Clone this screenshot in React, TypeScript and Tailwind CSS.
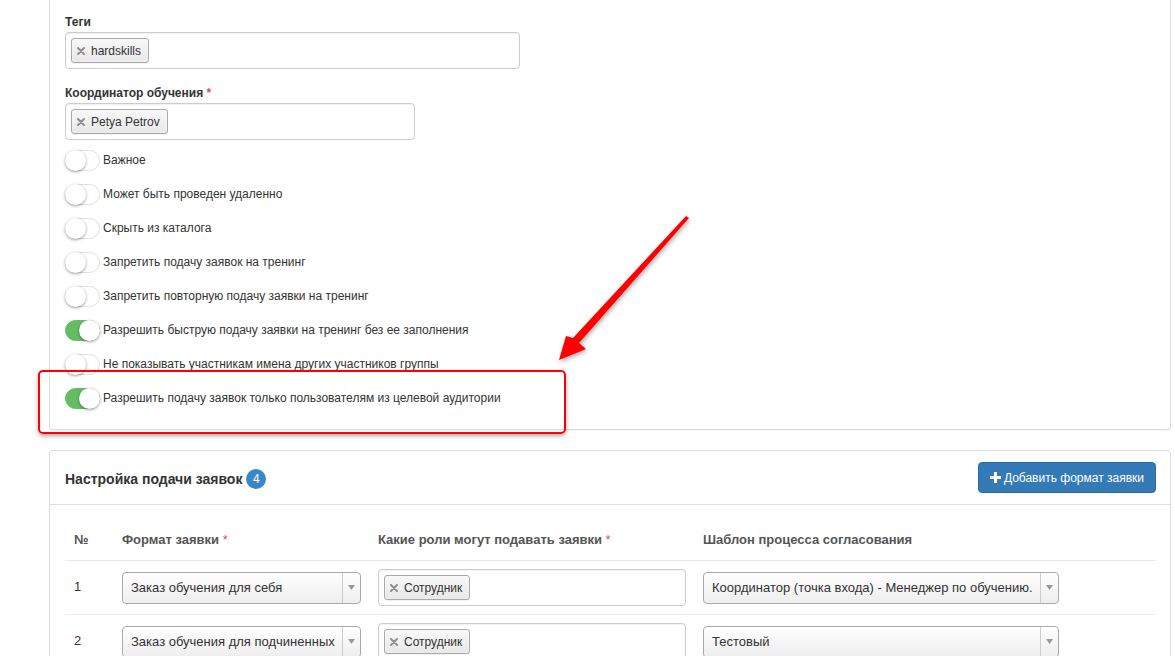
import React from 'react';

interface ToggleRow {
  label: string;
  on: boolean;
}

const toggles: ToggleRow[] = [
  { label: 'Важное', on: false },
  { label: 'Может быть проведен удаленно', on: false },
  { label: 'Скрыть из каталога', on: false },
  { label: 'Запретить подачу заявок на тренинг', on: false },
  { label: 'Запретить повторную подачу заявки на тренинг', on: false },
  { label: 'Разрешить быструю подачу заявки на тренинг без ее заполнения', on: true },
  { label: 'Не показывать участникам имена других участников группы', on: false },
  { label: 'Разрешить подачу заявок только пользователям из целевой аудитории', on: true },
];

interface RequestRow {
  n: number;
  format: string;
  role: string;
  template: string;
}

const rows: RequestRow[] = [
  { n: 1, format: 'Заказ обучения для себя', role: 'Сотрудник', template: 'Координатор (точка входа) - Менеджер по обучению.' },
  { n: 2, format: 'Заказ обучения для подчиненных', role: 'Сотрудник', template: 'Тестовый' },
];

function Chip({ text }: { text: string }) {
  return (
    <span className="inline-flex items-center h-[25px] pl-[5px] pr-[7px] gap-[6px] rounded-[3px] border border-[#aaa] bg-gradient-to-b from-[#f8f8f8] to-[#e8e8e8] shadow-[0_0_2px_rgba(255,255,255,0.8)_inset,0_1px_0_rgba(0,0,0,0.05)] text-[12px] text-[#333]">
      <svg width="8" height="8" viewBox="0 0 8 8">
        <path d="M1 1l6 6M7 1L1 7" stroke="#8f8f8f" strokeWidth="2" strokeLinecap="round" />
      </svg>
      {text}
    </span>
  );
}

function TagBox({ tag, width }: { tag: string; width: string }) {
  return (
    <div className={`${width} h-[37px] rounded-[4px] border border-[#ccc] bg-white px-[5px] flex items-center shadow-[inset_0_1px_1px_rgba(0,0,0,0.06)]`}>
      <Chip text={tag} />
    </div>
  );
}

function Switch({ on }: { on: boolean }) {
  return (
    <span
      className={`relative inline-block w-[35px] h-[21px] rounded-full border shrink-0 ${
        on ? 'bg-[#64bd63] border-[#64bd63]' : 'bg-white border-[#dfdfdf]'
      }`}
    >
      <span
        className={`absolute top-[-1px] w-[21px] h-[21px] rounded-full bg-white shadow-[0_1px_3px_rgba(0,0,0,0.4)] ${
          on ? 'right-[-1px]' : 'left-[-1px]'
        }`}
      />
    </span>
  );
}

function Select({ value, width }: { value: string; width: string }) {
  return (
    <div className={`${width} h-[32px] rounded-[4px] border border-[#aaa] bg-gradient-to-b from-white to-[#eee] flex items-center text-[13px] text-[#333]`}>
      <span className="flex-1 pl-[8px] whitespace-nowrap overflow-hidden">{value}</span>
      <span className="w-[18px] h-full border-l border-[#ccc] flex items-center justify-center">
        <svg width="7" height="5" viewBox="0 0 7 5">
          <path d="M0 0h7L3.5 5z" fill="#999" />
        </svg>
      </span>
    </div>
  );
}

export default function App() {
  return (
    <div className="relative min-h-screen bg-white text-[#333] font-['Liberation_Sans',Arial,sans-serif] overflow-hidden">
      <div className="pl-[49px] pr-[4px]">
        <section className="border border-t-0 border-[#ddd] rounded-b-[4px] px-[15px] pt-[14px] pb-[14px] shadow-[0_1px_1px_rgba(0,0,0,0.05)]">
          <div className="mb-[16px]">
            <div className="h-[17px] leading-[17px] text-[12px] font-bold mb-[1px]">Теги</div>
            <TagBox tag="hardskills" width="w-[455px]" />
          </div>
          <div>
            <div className="h-[17px] leading-[17px] text-[12px] font-bold mb-[1px]">
              Координатор обучения <span className="text-[#d9534f]">*</span>
            </div>
            <TagBox tag="Petya Petrov" width="w-[350px]" />
          </div>
          <div className="mt-[3px]">
            {toggles.map((t) => (
              <div key={t.label} className="h-[34px] flex items-center gap-[3px]">
                <Switch on={t.on} />
                <span className="text-[12px] text-[#333] whitespace-nowrap">{t.label}</span>
              </div>
            ))}
          </div>
        </section>

        <section className="mt-[20px] border border-[#ddd] rounded-t-[4px] shadow-[0_1px_1px_rgba(0,0,0,0.05)]">
          <div className="h-[54px] border-b border-[#ddd] pl-[15px] pr-[14px] flex items-center justify-between">
            <div className="flex items-center gap-[4px] pt-[3px]">
              <span className="text-[14px] font-bold text-[#333]">Настройка подачи заявок</span>
              <span className="w-[20px] h-[20px] rounded-full bg-[#3a87c8] text-white text-[12px] flex items-center justify-center">4</span>
            </div>
            <button className="h-[31px] px-[11px] rounded-[4px] bg-[#337ab7] border border-[#2e6da4] text-white text-[12px] flex items-center gap-[3px]">
              <svg width="11" height="11" viewBox="0 0 11 11">
                <path d="M4 0h3v4h4v3H7v4H4V7H0V4h4z" fill="#fff" />
              </svg>
              Добавить формат заявки
            </button>
          </div>
          <div className="pt-[15px] px-[15px] pr-[14px]">
            <div className="grid grid-cols-[49px_256px_325px_1fr] h-[40px] items-center text-[13px] font-bold text-[#555]">
              <div className="pl-[9px]">№</div>
              <div className="pl-[8px]">
                Формат заявки <span className="text-[#d9534f] font-normal">*</span>
              </div>
              <div className="pl-[8px]">
                Какие роли могут подавать заявки <span className="text-[#d9534f] font-normal">*</span>
              </div>
              <div className="pl-[8px]">Шаблон процесса согласования</div>
            </div>
            {rows.map((r) => (
              <div key={r.n} className="grid grid-cols-[49px_256px_325px_1fr] h-[54px] items-center border-t border-[#e6ebf0] text-[13px]">
                <div className="pl-[9px] pb-[1px]">{r.n}</div>
                <div className="pl-[8px]">
                  <Select value={r.format} width="w-[239px]" />
                </div>
                <div className="pl-[8px]">
                  <div className="w-[308px] h-[37px] rounded-[4px] border border-[#ccc] bg-white px-[5px] flex items-center shadow-[inset_0_1px_1px_rgba(0,0,0,0.06)]">
                    <Chip text={r.role} />
                  </div>
                </div>
                <div className="pl-[8px]">
                  <Select value={r.template} width="w-[356px]" />
                </div>
              </div>
            ))}
          </div>
        </section>
      </div>

      <div className="absolute left-[38px] top-[370px] w-[528px] h-[64px] border-2 border-[#ff0000] rounded-[5px] shadow-[0_2px_4px_rgba(0,0,0,0.35)] pointer-events-none" />

      <svg className="absolute left-0 top-0 pointer-events-none drop-shadow-[1px_2px_2px_rgba(0,0,0,0.35)]" width="1175" height="656" viewBox="0 0 1175 656">
        <polygon points="686,216 689,218 579,343 586,349 559,360 566,336 573,338" fill="#ff0000" />
      </svg>
    </div>
  );
}
